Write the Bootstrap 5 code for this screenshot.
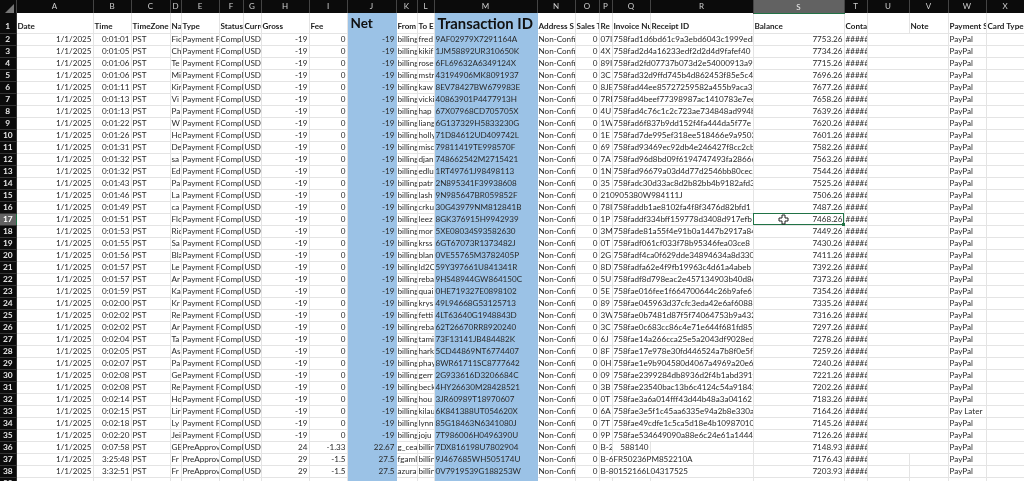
<!DOCTYPE html>
<html lang="en">
<head>
<meta charset="utf-8">
<title>Transactions</title>
<link href="https://cdn.jsdelivr.net/npm/bootstrap@5.3.0/dist/css/bootstrap.min.css" rel="stylesheet">
<style>
html,body{margin:0;height:481px;overflow:hidden;background:#fff}
.xsheet{width:1024px;table-layout:fixed;border-collapse:collapse;margin:0;filter:blur(.35px);font:8.1px/11px Lato,"Liberation Sans",sans-serif;color:#333}
.xsheet>:not(caption)>*>*{padding:0 1px;height:12px;line-height:11px;border:0;border-right:1px solid #e4e4e4;border-bottom:1px solid #e4e4e4;white-space:nowrap;overflow:hidden;box-shadow:none;background:transparent;color:#2a2a2a}
.xsheet>thead>tr>th{height:13px;line-height:13px;background:#0b0b0b;color:#cfcfcf;font-weight:400;font-size:8px;text-align:center;padding:0;border-right:1px solid #444;border-bottom:0}
.xsheet>thead>tr>th.picked{background:#626262;color:#eee;line-height:12px;border-bottom:1px solid #217346}
.xsheet>tbody>tr>th{background:#0b0b0b;color:#e4e4e4;font-size:8.4px;font-weight:700;text-align:center;padding:0;border-color:#333}
.xsheet>tbody>tr>th.picked{background:#626262;color:#fff;border-right:1px solid #217346}
.xsheet>tbody>tr.hrow>*{height:20px;line-height:14px;font-weight:700;color:#1c1c1c;vertical-align:bottom}
.xsheet>tbody>tr.hrow>th{color:#e4e4e4;line-height:14px}
.xsheet>tbody>tr.hrow>td.big1{font-size:13.5px;line-height:18px;vertical-align:top;padding:1px 0 0 3px;color:#111}
.xsheet>tbody>tr.hrow>td.big2{font-size:14.8px;line-height:18px;vertical-align:top;padding:1px 0 0 3px;color:#111}
.xsheet>tbody>tr>td.blue{background:#9bc2e6;border-color:#9bc2e6}
.xsheet>tbody>tr>td.num{text-align:right}
.xsheet>tbody>tr>td.sel{position:relative;overflow:visible;outline:1px solid #217346;outline-offset:-1px}
.xhandle{position:absolute;right:-1px;bottom:-1px;width:3px;height:3px;background:#217346}
.xcross{position:absolute;left:24px;top:0;width:11px;height:11px}
.xcorner{display:block;margin:3px 2px 0 auto}
</style>
</head>
<body>
<table class="table xsheet" id="sheet">
<colgroup id="cols"></colgroup>
<thead id="top"></thead>
<tbody id="rows"></tbody>
</table>
<script>
var w=[16,77,38,39,11,38,24,18,48,38,49,21,17,103,38,24,13,38,103,91,23,42,39,38,38];
var L="ABCDEFGHIJKLMNOPQRSTUVWX".split("");
document.getElementById("cols").innerHTML=w.map(function(x){return '<col style="width:'+x+'px">'}).join("");
document.getElementById("top").innerHTML='<tr><th><svg class="xcorner" width="9" height="9" viewBox="0 0 9 9"><path d="M9 0V9H0Z" fill="#777"/></svg></th>'+L.map(function(c){return '<th'+(c=="S"?' class="picked"':'')+'>'+c+'</th>'}).join("")+'</tr>';
var times="0:01:01 0:01:05 0:01:06 0:01:06 0:01:11 0:01:13 0:01:13 0:01:22 0:01:26 0:01:31 0:01:32 0:01:32 0:01:43 0:01:46 0:01:49 0:01:51 0:01:53 0:01:55 0:01:56 0:01:57 0:01:57 0:01:59 0:02:00 0:02:02 0:02:02 0:02:04 0:02:05 0:02:07 0:02:08 0:02:08 0:02:14 0:02:15 0:02:18 0:02:20 0:07:58 3:25:48 3:32:51".split(" ");
var names="Fic Ch Te Mi Kir Vi Pa W Ho De sa Ed Pa La ca Flc Ric Sa Bla Le Ar Ka Kr Re Ar Ta As Pa Ge Re Ho Lir Ly Jei GE Fr Fr".split(" ");
var mails="fred kikif rose mstr kaw vicki hap liang holly misc djan edlu patr lash crku leez mor krss blan ld2C reba quai krys fetti reba tami hark phay gerr beck hou kilau lynn joju billin billin billin".split(" ");
var ids="9AF02979X7291164A 1JM58892UR310650K 6FL69632A6349124X 43194906MK8091937 8EV78427BW679983E 40863901P4477913H 67X07968CD705705X 6G137329H5833230G 71D84612UD409742L 79811419TE998570F 748662542M2715421 1RT49761J98498113 2N895341F39938608 9N985647BR059852F 30G43979NM812841B 8GK376915H9942939 5XE08034S93582630 6GT67073R1373482J 0VE55765M3782405P 59Y397661U841341R 9HS48944GW864150C 0HE719327E0898102 49L94668G53125713 4LT63640G1948843D 62T26670RR8920240 73F13141JB484482K 5CD44869NT6774407 8WR61711SC8777642 2G933616D3206684C 4HY26630M28428521 3JR60989T18970607 6K841388UT054620X 85G18463N6341080J 7T986006H0496390U 7DX816198U7802904 9J467685WH505174U 0V7919539G188253W".split(" ");
var refs="07I 4X 89I 3C 8JE 7RI 4U 1W 1E 69 7A 1N 35 210905380W984111J 78I 1P 3M 0T 2G 8D 5U 5E 89 3W 3C 6J 8F 0H 09 3B 0T 6A 7T 9P B-2 B-6FR50236PM852210A B-80152166L04317525".split(" ");
var inv="758fad1d6bd61c9a3ebd6043c1999edb 758fad2d4a16233edf2d2d4d9fafef40 758fad2fd07737b073d2e54000913a9f 758fad32d9ffd745b4d862453f85e5c4 758fad44ee85727259582a455b9aca31 758fad4beef77398987ac1410783e7ee 758fad4c76c1c2c723ae734848ad994b 758fad6f837b9dd152f4fa444da5f77e 758fad7de995ef318ee518466e9a9503 758fad93469ec92db4e246427f8cc2cb 758fad96d8bd09f6194747493fa28666 758fad96679a03d4d77d2546bb80cec5 758fadc30d33ac8d2b82bb4b9182afd3 - 758faddb1ae8102fa4f8f3476d82bfd1 758faddf334bff159778d3408d917efb 758fade81a55f4e91b0a1447b2917a84 758fadf061cf033f78b95346fea03ce8 758fadf4ca0f629dde34894634a8d330 758fadfa62e4f9fb19963c4d61a4abeb 758fadf8d798eac2e457134903b40d8e 758fae016fee1f664700644c26b9afe6 758fae045963d37cfc3eda42e6af6088 758fae0b7481d87f5f74064753b9a432 758fae0c683cc86c4e71e644f681fd85 758fae14a266cca25e5a2043df9028ed 758fae17e978e30fd446524a7b8f0e5f 758fae1e9b904580d4067a4969a20e69 758fae2399284db8936d2f4b1abd391f 758fae23540bac13b6c4124c54a91842 758fae3a6a014fff43d44b48a3a04162 758fae3e5f1c45aa6335e94a2b8e330a 758fae49cdfe1c5ca5d18e4b10987010 758fae534649090a88e6c24e61a1444c".split(" ");
function td(t,c,s){return '<td'+(c?' class="'+c+'"':'')+(s?' colspan="'+s+'"':'')+'>'+t+'</td>'}
var heads=["Date","Time","TimeZone","Na","Type","Status","Curre","Gross","Fee","Net","From E","To E","Transaction ID","Address S","Sales T","Re","Invoice Nu","Receipt ID","Balance","Contac","","Note","Payment S","Card Type"];
var h='<tr class="hrow"><th>1</th>'+heads.map(function(t,i){return td(t,i==9?"blue big1":i==12?"blue big2":"")}).join("")+'</tr>';
for(var i=0;i<37;i++){
  var n=i+2,late=i>33,g=["24","29","29"][i-34]||"-19",f=["-1.33","-1.5","-1.5"][i-34]||"0",nt=["22.67","27.5","27.5"][i-34]||"-19";
  var bal=["7148.93","7176.43","7203.93"][i-34]||(7753.26-19*i).toFixed(2);
  var r='<tr><th'+(n==17?' class="picked"':'')+'>'+n+'</th>';
  r+=td("1/1/2025","num")+td(times[i],"num")+td("PST")+td(names[i])+td(late?"PreApprov":"Payment F")+td("Compl")+td("USD")+td(g,"num")+td(f,"num")+td(nt,"num blue");
  r+=td(i==34?"g_cea":i==35?"fgaml":i==36?"azura":"billing")+td(mails[i])+td(ids[i],"blue")+td("Non-Confi")+td("0","num");
  if(n==15||n==37||n==38){r+=td(refs[i],"",3)}
  else if(n==36){r+=td(refs[i])+td("588140","num")+td("")}
  else{r+=td(refs[i])+td(inv[i],"",2)}
  if(n==17){r+='<td class="num sel">7468.26<svg class="xcross" viewBox="0 0 11 11"><path d="M4 1h3v3h3v3H7v3H4V7H1V4h3z" fill="#fff" stroke="#222"/></svg><span class="xhandle"></span></td>'}
  else{r+=td(bal,"num")}
  r+=td("#####");
  r+=n>=37?td("")+td(""):td("","",2);
  r+=td(n==33?"Pay Later":"PayPal")+td("")+'</tr>';
  h+=r;
}
h+='<tr><th>39</th>'+L.map(function(c){return td("",(c=="J"||c=="M")?"blue":"")}).join("")+'</tr>';
document.getElementById("rows").innerHTML=h;
</script>
<script src="https://cdn.jsdelivr.net/npm/bootstrap@5.3.0/dist/js/bootstrap.bundle.min.js"></script>
</body>
</html>
